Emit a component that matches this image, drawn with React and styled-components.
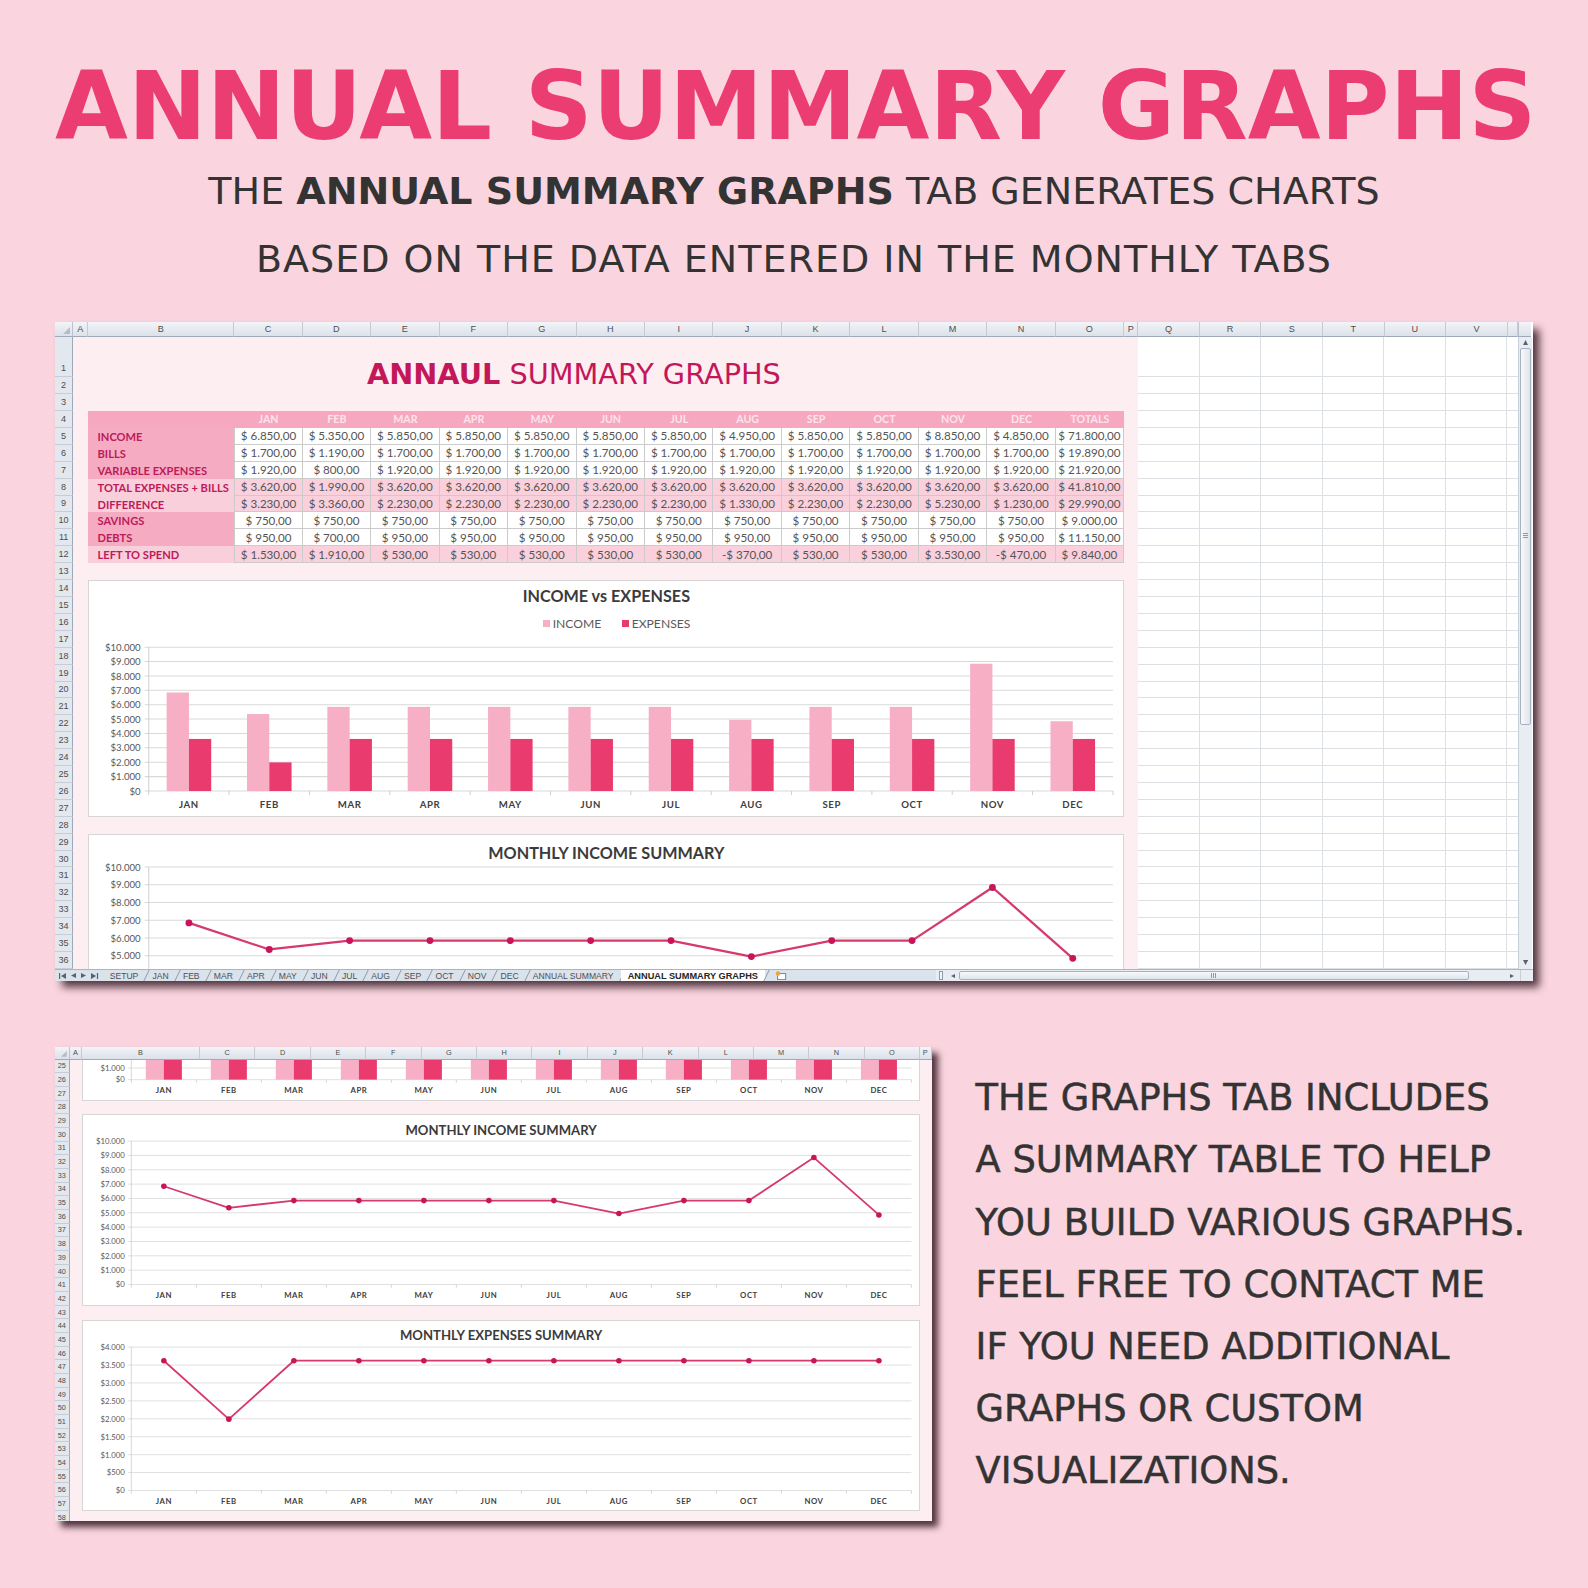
import React from "react";
import styled, { createGlobalStyle } from "styled-components";

// sheet geometry, at 100% zoom
const ROW = 16.7;
const ROW1 = 40;
const RH_W = 18;
const COL_A = 15;
const COL_B = 144;
const COL = 67.6;
const COL_P = 14;
const GCOL = 60.8;
const CHART_H = 14 * ROW;
const HEAD_H = ROW1 + 11 * ROW;

const PLOT_L = 59;
const PLOT_R = 1011;
const CAT_W = (PLOT_R - PLOT_L) / 12;

const INCOME_C = "#f6afc5";
const EXPENSE_C = "#ea3b6f";
const CRIMSON = "#bd1a5a";

const MONTHS = ["JAN", "FEB", "MAR", "APR", "MAY", "JUN", "JUL", "AUG", "SEP", "OCT", "NOV", "DEC"];
const MID_COLS = "CDEFGHIJKLMNO".split("");
const GRID_COLS = "QRSTUV".split("");
const INCOME = [6850, 5350, 5850, 5850, 5850, 5850, 5850, 4950, 5850, 5850, 8850, 4850];
const EXPENSES = [3620, 1990, 3620, 3620, 3620, 3620, 3620, 3620, 3620, 3620, 3620, 3620];

const rep = (v, n) => Array.from({ length: n }, () => v);

const TABLE = [
  { label: "INCOME", tone: "mid", values: ["$ 6.850,00", "$ 5.350,00", ...rep("$ 5.850,00", 5), "$ 4.950,00", "$ 5.850,00", "$ 5.850,00", "$ 8.850,00", "$ 4.850,00", "$ 71.800,00"] },
  { label: "BILLS", tone: "mid", values: ["$ 1.700,00", "$ 1.190,00", ...rep("$ 1.700,00", 10), "$ 19.890,00"] },
  { label: "VARIABLE EXPENSES", tone: "mid", values: ["$ 1.920,00", "$ 800,00", ...rep("$ 1.920,00", 10), "$ 21.920,00"] },
  { label: "TOTAL EXPENSES + BILLS", tone: "light", values: ["$ 3.620,00", "$ 1.990,00", ...rep("$ 3.620,00", 10), "$ 41.810,00"] },
  { label: "DIFFERENCE", tone: "light", values: ["$ 3.230,00", "$ 3.360,00", ...rep("$ 2.230,00", 5), "$ 1.330,00", "$ 2.230,00", "$ 2.230,00", "$ 5.230,00", "$ 1.230,00", "$ 29.990,00"] },
  { label: "SAVINGS", tone: "mid", values: [...rep("$ 750,00", 12), "$ 9.000,00"] },
  { label: "DEBTS", tone: "mid", values: ["$ 950,00", "$ 700,00", ...rep("$ 950,00", 10), "$ 11.150,00"] },
  { label: "LEFT TO SPEND", tone: "light", values: ["$ 1.530,00", "$ 1.910,00", ...rep("$ 530,00", 5), "-$ 370,00", "$ 530,00", "$ 530,00", "$ 3.530,00", "-$ 470,00", "$ 9.840,00"] },
];

// blocks of the sheet, top offsets from row 1
const SECTIONS = [
  { key: "head", top: 0, height: HEAD_H },
  { key: "bars", top: HEAD_H + ROW, height: CHART_H },
  { key: "income", top: HEAD_H + 2 * ROW + CHART_H, height: CHART_H },
  { key: "expenses", top: HEAD_H + 3 * ROW + 2 * CHART_H, height: CHART_H },
];

const TABS = ["SETUP", ...MONTHS, "ANNUAL SUMMARY", "ANNUAL SUMMARY GRAPHS"];

const NOTES = [
  "THE GRAPHS TAB INCLUDES",
  "A SUMMARY TABLE TO HELP",
  "YOU BUILD VARIOUS GRAPHS.",
  "FEEL FREE TO CONTACT ME",
  "IF YOU NEED ADDITIONAL",
  "GRAPHS OR CUSTOM",
  "VISUALIZATIONS.",
];

function money(v) {
  if (v < 1000) return `$${v}`;
  return `$${Math.floor(v / 1000)}.${String(v % 1000).padStart(3, "0")}`;
}

const rowTop = (n) => (n === 1 ? 0 : ROW1 + (n - 2) * ROW);
const catX = (i) => PLOT_L + (i + 0.5) * CAT_W;

function Plot({ height, top, bottom, max, step, range, children }) {
  const y = (v) => bottom - (v / max) * (bottom - top);
  const fits = (ty) => ty - 9 >= range[0] && ty + 2 <= range[1];
  const ticks = [];
  for (let v = 0; v <= max; v += step) ticks.push(v);
  return (
    <PlotSvg width={1021} height={height}>
      {ticks.map((v) => (
        <g key={v}>
          <line x1={PLOT_L - 4} x2={PLOT_R} y1={y(v)} y2={y(v)} stroke="#d9d9d9" />
          {fits(y(v) + 3.5) && (
            <AxisLabel x={PLOT_L - 8} y={y(v) + 3.5} textAnchor="end">
              {money(v)}
            </AxisLabel>
          )}
        </g>
      ))}
      <line x1={PLOT_L} x2={PLOT_L} y1={top} y2={bottom + 4} stroke="#cfcfcf" />
      {MONTHS.map((m, i) => (
        <line key={m} x1={PLOT_L + (i + 1) * CAT_W} x2={PLOT_L + (i + 1) * CAT_W} y1={bottom} y2={bottom + 4} stroke="#cfcfcf" />
      ))}
      {children(y)}
      {fits(bottom + 16.5) &&
        MONTHS.map((m, i) => (
          <MonthLabel key={m} x={catX(i)} y={bottom + 16.5} textAnchor="middle">
            {m}
          </MonthLabel>
        ))}
    </PlotSvg>
  );
}

function BarChart({ view }) {
  const plotTop = 51;
  const shows = (a, b) => view.from <= a && view.to >= b;
  return (
    <ChartBox>
      <ChartTitle $top={6}>{shows(6, 26) && "INCOME vs EXPENSES"}</ChartTitle>
      <Legend>
        {shows(34, 52) && (
          <>
            <LegendItem>
              <Swatch $c={INCOME_C} />
              INCOME
            </LegendItem>
            <LegendItem>
              <Swatch $c={EXPENSE_C} />
              EXPENSES
            </LegendItem>
          </>
        )}
      </Legend>
      <Plot
        height={CHART_H - 52}
        top={15}
        bottom={157}
        max={10000}
        step={1000}
        range={[view.from - plotTop, view.to - plotTop]}
      >
        {(y) =>
          MONTHS.map((m, i) => (
            <g key={m}>
              <rect x={catX(i) - 22} y={y(INCOME[i])} width={22} height={157 - y(INCOME[i])} fill={INCOME_C} />
              <rect x={catX(i)} y={y(EXPENSES[i])} width={22} height={157 - y(EXPENSES[i])} fill={EXPENSE_C} />
            </g>
          ))
        }
      </Plot>
    </ChartBox>
  );
}

function LineChart({ title, data, max, step, view }) {
  const plotTop = 28;
  return (
    <ChartBox>
      <ChartTitle $top={9}>{view.from <= 9 && view.to >= 28 && title}</ChartTitle>
      <Plot
        height={CHART_H - 29}
        top={5}
        bottom={180}
        max={max}
        step={step}
        range={[view.from - plotTop, view.to - plotTop]}
      >
        {(y) => (
          <g>
            <polyline
              points={data.map((v, i) => `${catX(i)},${y(v)}`).join(" ")}
              fill="none"
              stroke="#d63a6d"
              strokeWidth="2.2"
              strokeLinejoin="round"
            />
            {data.map((v, i) => (
              <circle key={i} cx={catX(i)} cy={y(v)} r="3.4" fill="#c8145a" />
            ))}
          </g>
        )}
      </Plot>
    </ChartBox>
  );
}

function SummaryBlock() {
  return (
    <div>
      <SheetTitle>
        <strong>ANNAUL</strong> SUMMARY GRAPHS
      </SheetTitle>
      <Table>
        <HeadCell />
        {[...MONTHS, "TOTALS"].map((m) => (
          <HeadCell key={m}>{m}</HeadCell>
        ))}
        {TABLE.map((row) => (
          <React.Fragment key={row.label}>
            <LabelCell $tone={row.tone}>{row.label}</LabelCell>
            {row.values.map((v, i) => (
              <ValueCell key={i} $tone={row.tone} $first={i === 0}>
                {v}
              </ValueCell>
            ))}
          </React.Fragment>
        ))}
      </Table>
    </div>
  );
}

function SheetSection({ kind, view }) {
  if (kind === "head") return <SummaryBlock />;
  if (kind === "bars") return <BarChart view={view} />;
  if (kind === "income")
    return <LineChart title="MONTHLY INCOME SUMMARY" data={INCOME} max={10000} step={1000} view={view} />;
  return <LineChart title="MONTHLY EXPENSES SUMMARY" data={EXPENSES} max={4000} step={500} view={view} />;
}

function Arrow({ dir, size = 5 }) {
  const pts = {
    up: `0,${size} ${size},${size} ${size / 2},0`,
    down: `0,0 ${size},0 ${size / 2},${size}`,
    left: `${size},0 ${size},${size} 0,${size / 2}`,
    right: `0,0 0,${size} ${size},${size / 2}`,
  }[dir];
  return (
    <svg width={size} height={size}>
      <polygon points={pts} fill="#5a6270" />
    </svg>
  );
}

function EndArrow({ dir }) {
  return (
    <svg width="7" height="6">
      {dir === "left" ? (
        <>
          <rect x="0" y="0" width="1.2" height="6" fill="#5a6270" />
          <polygon points="7,0 7,6 2,3" fill="#5a6270" />
        </>
      ) : (
        <>
          <polygon points="0,0 0,6 5,3" fill="#5a6270" />
          <rect x="5.8" y="0" width="1.2" height="6" fill="#5a6270" />
        </>
      )}
    </svg>
  );
}

function SheetTabs() {
  return (
    <TabBar>
      <NavBox>
        <EndArrow dir="left" />
        <Arrow dir="left" />
        <Arrow dir="right" />
        <EndArrow dir="right" />
      </NavBox>
      {TABS.map((t) => (
        <Tab key={t} $active={t === "ANNUAL SUMMARY GRAPHS"}>
          {t}
        </Tab>
      ))}
      <NewSheet>
        <svg width="12" height="9">
          <rect x="2.5" y="2.5" width="8" height="6" fill="#fff" stroke="#7b8696" />
          <circle cx="3" cy="2.5" r="2.2" fill="#e9a93a" />
        </svg>
      </NewSheet>
      <TabFill />
      <HScroll>
        <Splitter />
        <ScrollBtn>
          <Arrow dir="left" size={4} />
        </ScrollBtn>
        <HThumb>
          <Grip />
        </HThumb>
        <ScrollBtn>
          <Arrow dir="right" size={4} />
        </ScrollBtn>
      </HScroll>
      <CornerBox />
    </TabBar>
  );
}

function Sheet({ firstRow, rowCount, bodyHeight, wide, tabs, scale }) {
  const rows = Array.from({ length: rowCount }, (_, i) => firstRow + i);
  const winTop = rowTop(firstRow);
  const winBottom = winTop + bodyHeight;
  const shown = SECTIONS.filter((s) => s.top + s.height > winTop && s.top < winBottom);
  const shift = winTop - shown[0].top;

  return (
    <Frame $scale={scale}>
      <ColHeads>
        <SelectAll>
          <svg width="7" height="7">
            <polygon points="7,0 7,7 0,7" fill="#b3bcc7" />
          </svg>
        </SelectAll>
        <ColHead $w={COL_A}>A</ColHead>
        <ColHead $w={COL_B}>B</ColHead>
        {MID_COLS.map((c) => (
          <ColHead key={c} $w={COL}>
            {c}
          </ColHead>
        ))}
        <ColHead $w={COL_P}>P</ColHead>
        {wide &&
          GRID_COLS.map((c) => (
            <ColHead key={c} $w={GCOL}>
              {c}
            </ColHead>
          ))}
        {wide && <ColHead $w={10.4} />}
        {wide && <ScrollCap />}
      </ColHeads>
      <Body $h={bodyHeight}>
        <RowHeads>
          {rows.map((n) => (
            <RowHead key={n} $h={n === 1 ? ROW1 : ROW} $tall={n === 1}>
              {n}
            </RowHead>
          ))}
        </RowHeads>
        <Panel>
          <PanelInner $offset={shift}>
            {shown.map((s) => (
              <SheetSection
                key={s.key}
                kind={s.key}
                view={{ from: Math.max(0, winTop - s.top), to: Math.min(s.height, winBottom - s.top) }}
              />
            ))}
          </PanelInner>
        </Panel>
        {wide && (
          <GridArea>
            {rows.map((n) => (
              <GridRow key={n} $h={n === 1 ? ROW1 : ROW} />
            ))}
          </GridArea>
        )}
        {wide && (
          <VScroll>
            <Arrow dir="up" size={5} />
            <VThumb>
              <Grip $vertical />
            </VThumb>
            <TabFill />
            <Arrow dir="down" size={5} />
          </VScroll>
        )}
      </Body>
      {tabs && <SheetTabs />}
    </Frame>
  );
}

export default function App() {
  return (
    <>
      <GlobalStyle />
      <Page>
        <Headline>ANNUAL SUMMARY GRAPHS</Headline>
        <Subline $gap={17.5}>
          THE <b>ANNUAL SUMMARY GRAPHS</b> TAB GENERATES CHARTS
        </Subline>
        <Subline $gap={30} $spacing={1}>
          BASED ON THE DATA ENTERED IN THE MONTHLY TABS
        </Subline>
        <TopSheet>
          <Sheet firstRow={1} rowCount={36} bodyHeight={624.5} wide tabs scale={1.0128} />
        </TopSheet>
        <BottomRow>
          <Sheet firstRow={25} rowCount={34} bodyHeight={563.5} scale={0.8194} />
          <Notes>
            {NOTES.map((n) => (
              <NoteLine key={n}>{n}</NoteLine>
            ))}
          </Notes>
        </BottomRow>
      </Page>
    </>
  );
}

// Styled Components
const GlobalStyle = createGlobalStyle`
  html, body {
    margin: 0;
    padding: 0;
    background: #fad5df;
  }
  * {
    box-sizing: border-box;
  }
`;

const Page = styled.main`
  width: 1588px;
  height: 1588px;
  overflow: hidden;
  background: #fad5df;
  padding: 60px 55px 0 55px;
  display: flex;
  flex-direction: column;
`;

const Headline = styled.h1`
  margin: 0;
  font-family: "DejaVu Sans", sans-serif;
  font-weight: 700;
  font-size: 94.2px;
  line-height: 94px;
  color: #ec3d73;
  text-align: center;
  white-space: nowrap;
`;

const Subline = styled.p`
  margin: ${(p) => p.$gap}px 0 0;
  font-family: "DejaVu Sans", sans-serif;
  font-size: 38px;
  line-height: 38px;
  color: #333;
  text-align: center;
  white-space: nowrap;
  letter-spacing: ${(p) => p.$spacing || 0}px;

  b {
    font-weight: 700;
  }
`;

const TopSheet = styled.div`
  margin-top: 44px;
`;

const BottomRow = styled.div`
  margin-top: 66px;
  display: flex;
  align-items: flex-start;
  gap: 44px;
`;

const Notes = styled.div`
  margin-top: 20px;
  display: flex;
  flex-direction: column;
`;

const NoteLine = styled.div`
  font-family: "DejaVu Sans", sans-serif;
  font-size: 36.8px;
  line-height: 62.1px;
  color: #333;
  -webkit-text-stroke: 0.5px #333;
  white-space: nowrap;
`;

const Frame = styled.div`
  zoom: ${(p) => p.$scale};
  flex-shrink: 0;
  align-self: flex-start;
  display: flex;
  flex-direction: column;
  background: #fff;
  box-shadow: 7px 7px 8px rgba(52, 24, 34, 0.85);
  font-family: "Liberation Sans", Arial, sans-serif;
`;

const ColHeads = styled.div`
  display: flex;
  height: 15px;
`;

const headBg = `
  background: linear-gradient(#f1f4f8, #dce2ea);
  color: #4d4d4d;
  font-size: 9px;
`;

const SelectAll = styled.div`
  ${headBg}
  flex: 0 0 ${RH_W}px;
  display: flex;
  align-items: flex-end;
  justify-content: flex-end;
  padding: 0 2px 2px 0;
  border-right: 1px solid #b9c2cd;
  border-bottom: 1px solid #9eaaba;
`;

const ColHead = styled.div`
  ${headBg}
  flex: 0 0 ${(p) => p.$w}px;
  display: flex;
  align-items: center;
  justify-content: center;
  overflow: hidden;
  border-right: 1px solid #c3cbd5;
  border-bottom: 1px solid #9eaaba;
`;

const ScrollCap = styled.div`
  ${headBg}
  flex: 0 0 13px;
  border-bottom: 1px solid #9eaaba;
  border-left: 1px solid #b9c2cd;
`;

const Body = styled.div`
  display: flex;
  height: ${(p) => p.$h}px;
  overflow: hidden;
`;

const RowHeads = styled.div`
  flex: 0 0 ${RH_W}px;
  display: flex;
  flex-direction: column;
  overflow: hidden;
`;

const RowHead = styled.div`
  ${headBg}
  background: #e3e8ee;
  flex: 0 0 ${(p) => p.$h}px;
  display: flex;
  align-items: ${(p) => (p.$tall ? "flex-end" : "center")};
  justify-content: center;
  padding-bottom: ${(p) => (p.$tall ? 3 : 0)}px;
  border-right: 1px solid #9eaaba;
  border-bottom: 1px solid #c6cdd6;
`;

const Panel = styled.div`
  flex: 0 0 ${COL_A + COL_B + 13 * COL + COL_P}px;
  background: #fdeef2;
  overflow: hidden;
`;

const PanelInner = styled.div`
  margin-top: -${(p) => p.$offset}px;
  padding: 0 ${COL_P}px 0 ${COL_A}px;
  display: flex;
  flex-direction: column;
  gap: ${ROW}px;
`;

const SheetTitle = styled.div`
  height: ${ROW1 + 2 * ROW}px;
  padding: 23.5px 0 0 275px;
  font-family: "DejaVu Sans", sans-serif;
  font-size: 28.4px;
  line-height: 28px;
  color: #c4175a;
  white-space: nowrap;

  strong {
    font-weight: 700;
  }
`;

const Table = styled.div`
  display: grid;
  grid-template-columns: ${COL_B}px repeat(13, ${COL}px);
  grid-auto-rows: ${ROW}px;
  font-family: Lato, "Liberation Sans", sans-serif;
`;

const HeadCell = styled.div`
  background: #f6a8c0;
  color: #fde4ec;
  font-size: 10.5px;
  font-weight: 700;
  display: flex;
  align-items: center;
  justify-content: center;
`;

const LabelCell = styled.div`
  background: ${(p) => (p.$tone === "light" ? "#f9cfdb" : "#f5acc3")};
  color: ${CRIMSON};
  font-size: 11px;
  font-weight: 700;
  display: flex;
  align-items: center;
  padding-left: 9px;
  white-space: nowrap;
`;

const ValueCell = styled.div`
  background: ${(p) => (p.$tone === "light" ? "#f9d0dc" : "#fff")};
  color: #555;
  font-size: 11.5px;
  display: flex;
  align-items: center;
  justify-content: center;
  white-space: nowrap;
  border-right: 1px solid #cbcbcb;
  border-bottom: 1px solid #cbcbcb;
  border-left: ${(p) => (p.$first ? "1px solid #cbcbcb" : "none")};
`;

const ChartBox = styled.div`
  height: ${CHART_H}px;
  flex-shrink: 0;
  background: #fff;
  border: 1px solid #d6d6d6;
  display: flex;
  flex-direction: column;
  align-items: center;
`;

const ChartTitle = styled.div`
  margin-top: ${(p) => p.$top}px;
  height: 18px;
  font-family: Lato, "Liberation Sans", sans-serif;
  font-weight: 700;
  font-size: 16px;
  line-height: 18px;
  color: #3b3b3b;
`;

const Legend = styled.div`
  margin: 10px 0 0 20px;
  height: 16px;
  display: flex;
  align-items: center;
  gap: 20px;
  font-family: Lato, "Liberation Sans", sans-serif;
  font-size: 12px;
  color: #595959;
`;

const LegendItem = styled.span`
  display: flex;
  align-items: center;
  gap: 3px;
`;

const Swatch = styled.i`
  width: 7px;
  height: 7px;
  background: ${(p) => p.$c};
`;

const PlotSvg = styled.svg`
  display: block;
  flex-shrink: 0;
  align-self: flex-start;
`;

const AxisLabel = styled.text`
  font-family: Lato, "Liberation Sans", sans-serif;
  font-size: 9.5px;
  fill: #595959;
`;

const MonthLabel = styled.text`
  font-family: Lato, "Liberation Sans", sans-serif;
  font-size: 9.5px;
  font-weight: 700;
  letter-spacing: 0.6px;
  fill: #404040;
`;

const GridArea = styled.div`
  flex: 0 0 ${6 * GCOL + 10.4}px;
  background: #fff;
  display: flex;
  flex-direction: column;
  overflow: hidden;
`;

const GridRow = styled.div`
  flex: 0 0 ${(p) => p.$h}px;
  border-bottom: 1px solid #dcdfe3;
  background-image: repeating-linear-gradient(
    to right,
    transparent 0,
    transparent ${GCOL - 1}px,
    #dcdfe3 ${GCOL - 1}px,
    #dcdfe3 ${GCOL}px
  );
`;

const VScroll = styled.div`
  flex: 0 0 13px;
  background: #e8edf3;
  border-left: 1px solid #c6ced8;
  display: flex;
  flex-direction: column;
  align-items: center;
  padding: 3px 0 4px;
  gap: 3px;
`;

const VThumb = styled.div`
  width: 10px;
  height: 372px;
  border: 1px solid #a7b2c0;
  border-radius: 2px;
  background: linear-gradient(to right, #f7f9fb, #dfe5ec);
  display: flex;
  align-items: center;
  justify-content: center;
`;

const Grip = styled.div`
  width: ${(p) => (p.$vertical ? 5 : 6)}px;
  height: ${(p) => (p.$vertical ? 6 : 5)}px;
  background: repeating-linear-gradient(
    ${(p) => (p.$vertical ? "to bottom" : "to right")},
    #8f9aa8 0,
    #8f9aa8 1px,
    transparent 1px,
    transparent 2px
  );
`;

const TabBar = styled.div`
  display: flex;
  align-items: stretch;
  height: 12px;
  background: #dae2eb;
  border-top: 1px solid #a9b5c3;
`;

const NavBox = styled.div`
  flex: 0 0 47px;
  display: flex;
  align-items: center;
  gap: 5px;
  padding-left: 4px;
`;

const Tab = styled.div`
  position: relative;
  padding: 0 7px;
  display: flex;
  align-items: center;
  font-size: ${(p) => (p.$active ? 9.1 : 8.5)}px;
  font-weight: ${(p) => (p.$active ? 700 : 400)};
  color: ${(p) => (p.$active ? "#262626" : "#505050")};
  background: ${(p) => (p.$active ? "#fff" : "transparent")};
  white-space: nowrap;

  &::after {
    content: "";
    position: absolute;
    right: -2px;
    top: 0;
    bottom: 0;
    border-right: 1px solid #8e9aaa;
    transform: skewX(-26deg);
  }
`;

const NewSheet = styled.div`
  padding: 0 8px 0 10px;
  display: flex;
  align-items: center;
`;

const TabFill = styled.div`
  flex: 1;
`;

const HScroll = styled.div`
  flex: 0 0 576px;
  display: flex;
  align-items: center;
  gap: 2px;
  padding: 0 4px 0 2px;
  background: #e8edf3;
`;

const Splitter = styled.div`
  width: 4px;
  height: 9px;
  border: 1px solid #8e9aaa;
  background: #f3f5f8;
  margin-right: 4px;
`;

const ScrollBtn = styled.div`
  width: 8px;
  display: flex;
  align-items: center;
  justify-content: center;
`;

const HThumb = styled.div`
  flex: 1;
  margin-right: 36px;
  height: 9px;
  border: 1px solid #a7b2c0;
  border-radius: 2px;
  background: linear-gradient(#f7f9fb, #dfe5ec);
  display: flex;
  align-items: center;
  justify-content: center;
`;

const CornerBox = styled.div`
  flex: 0 0 13px;
  background: #e8edf3;
  border-left: 1px solid #c6ced8;
`;
